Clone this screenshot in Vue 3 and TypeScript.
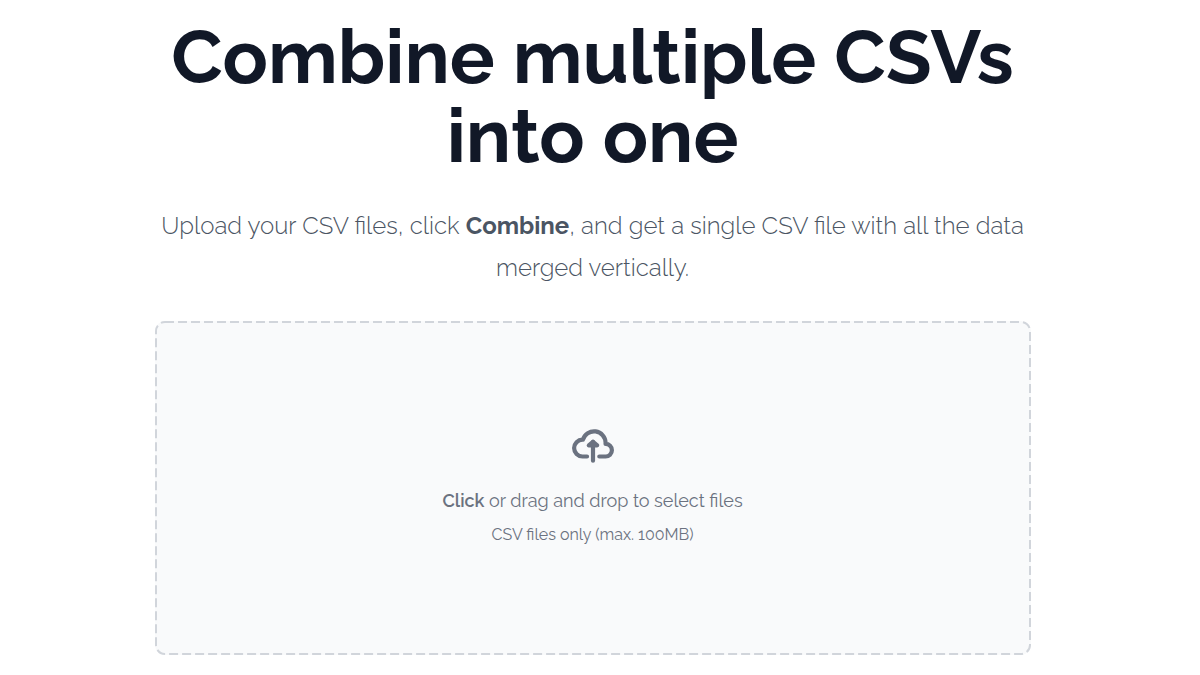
<script setup lang="ts">
import { ref } from 'vue'

const files = ref<File[]>([])

function onSelect(event: Event): void {
  const input = event.target as HTMLInputElement
  files.value = Array.from(input.files ?? [])
}

function onDrop(event: DragEvent): void {
  files.value = Array.from(event.dataTransfer?.files ?? [])
}
</script>

<template>
  <main class="page">
    <div class="content">
      <h1 class="title">Combine multiple CSVs into one</h1>
      <p class="lead">
        Upload your CSV files, click <strong>Combine</strong>, and get a single CSV file with all the data merged
        vertically.
      </p>
      <label class="dropzone" for="csv-files" @dragover.prevent @drop.prevent="onDrop">
        <svg class="frame" aria-hidden="true">
          <rect class="frame-line" />
        </svg>
        <svg class="cloud" viewBox="0 0 20 16" aria-hidden="true">
          <path
            d="M13 13h3a3 3 0 0 0 0-6h-.025A5.56 5.56 0 0 0 16 6.500 5.500 5.500 0 0 0 5.207 5.021C5.137 5.017 5.071 5 5 5a4 4 0 0 0 0 8h2.167M10 15V6"
          />
          <path class="arrow-head" d="M10 6 8 7.700h4z" />
        </svg>
        <span class="prompt"><strong>Click</strong> or drag and drop to select files</span>
        <span class="hint">CSV files only (max. 100MB)</span>
        <input id="csv-files" class="file-input" type="file" accept=".csv" multiple @change="onSelect" />
      </label>
    </div>
  </main>
</template>

<style>
body {
  background: #fff;
}
</style>

<style scoped>
.page {
  padding: 17px 27px 20px 12px;
  font-family: Raleway, Lato, "Open Sans", sans-serif;
  font-feature-settings: "onum" 1, "lnum" 0;
  text-align: center;
}
.content {
  max-width: 876px;
  margin: 0 auto;
}
.title {
  margin: 0;
  color: #111827;
  font-size: 75px;
  line-height: 79px;
  font-weight: 700;
}
.lead {
  margin: 30px 0 32px;
  color: #4b5563;
  font-size: 24px;
  line-height: 42px;
  font-weight: 300;
}
.lead strong {
  font-weight: 700;
}
.dropzone {
  position: relative;
  display: flex;
  flex-direction: column;
  align-items: center;
  justify-content: center;
  min-height: 334px;
  border-radius: 10px;
  background: #f9fafb;
  color: #6b7280;
  cursor: pointer;
}
.frame {
  position: absolute;
  inset: 0;
  width: 100%;
  height: 100%;
}
.frame-line {
  x: 1px;
  y: 1px;
  width: calc(100% - 2px);
  height: calc(100% - 2px);
  rx: 9px;
  fill: none;
  stroke: #d1d5db;
  stroke-width: 2px;
  stroke-dasharray: 9 4;
}
.cloud {
  width: 42px;
  height: 34px;
  margin-bottom: 24px;
  fill: none;
  stroke: #6b7280;
  stroke-width: 2;
  stroke-linecap: round;
  stroke-linejoin: round;
}
.arrow-head {
  fill: #6b7280;
}
.prompt {
  font-size: 18px;
  line-height: 28px;
}
.prompt strong {
  font-weight: 600;
}
.hint {
  margin-top: 8px;
  font-size: 16px;
  line-height: 24px;
}
.file-input {
  position: absolute;
  width: 1px;
  height: 1px;
  opacity: 0;
}
</style>
